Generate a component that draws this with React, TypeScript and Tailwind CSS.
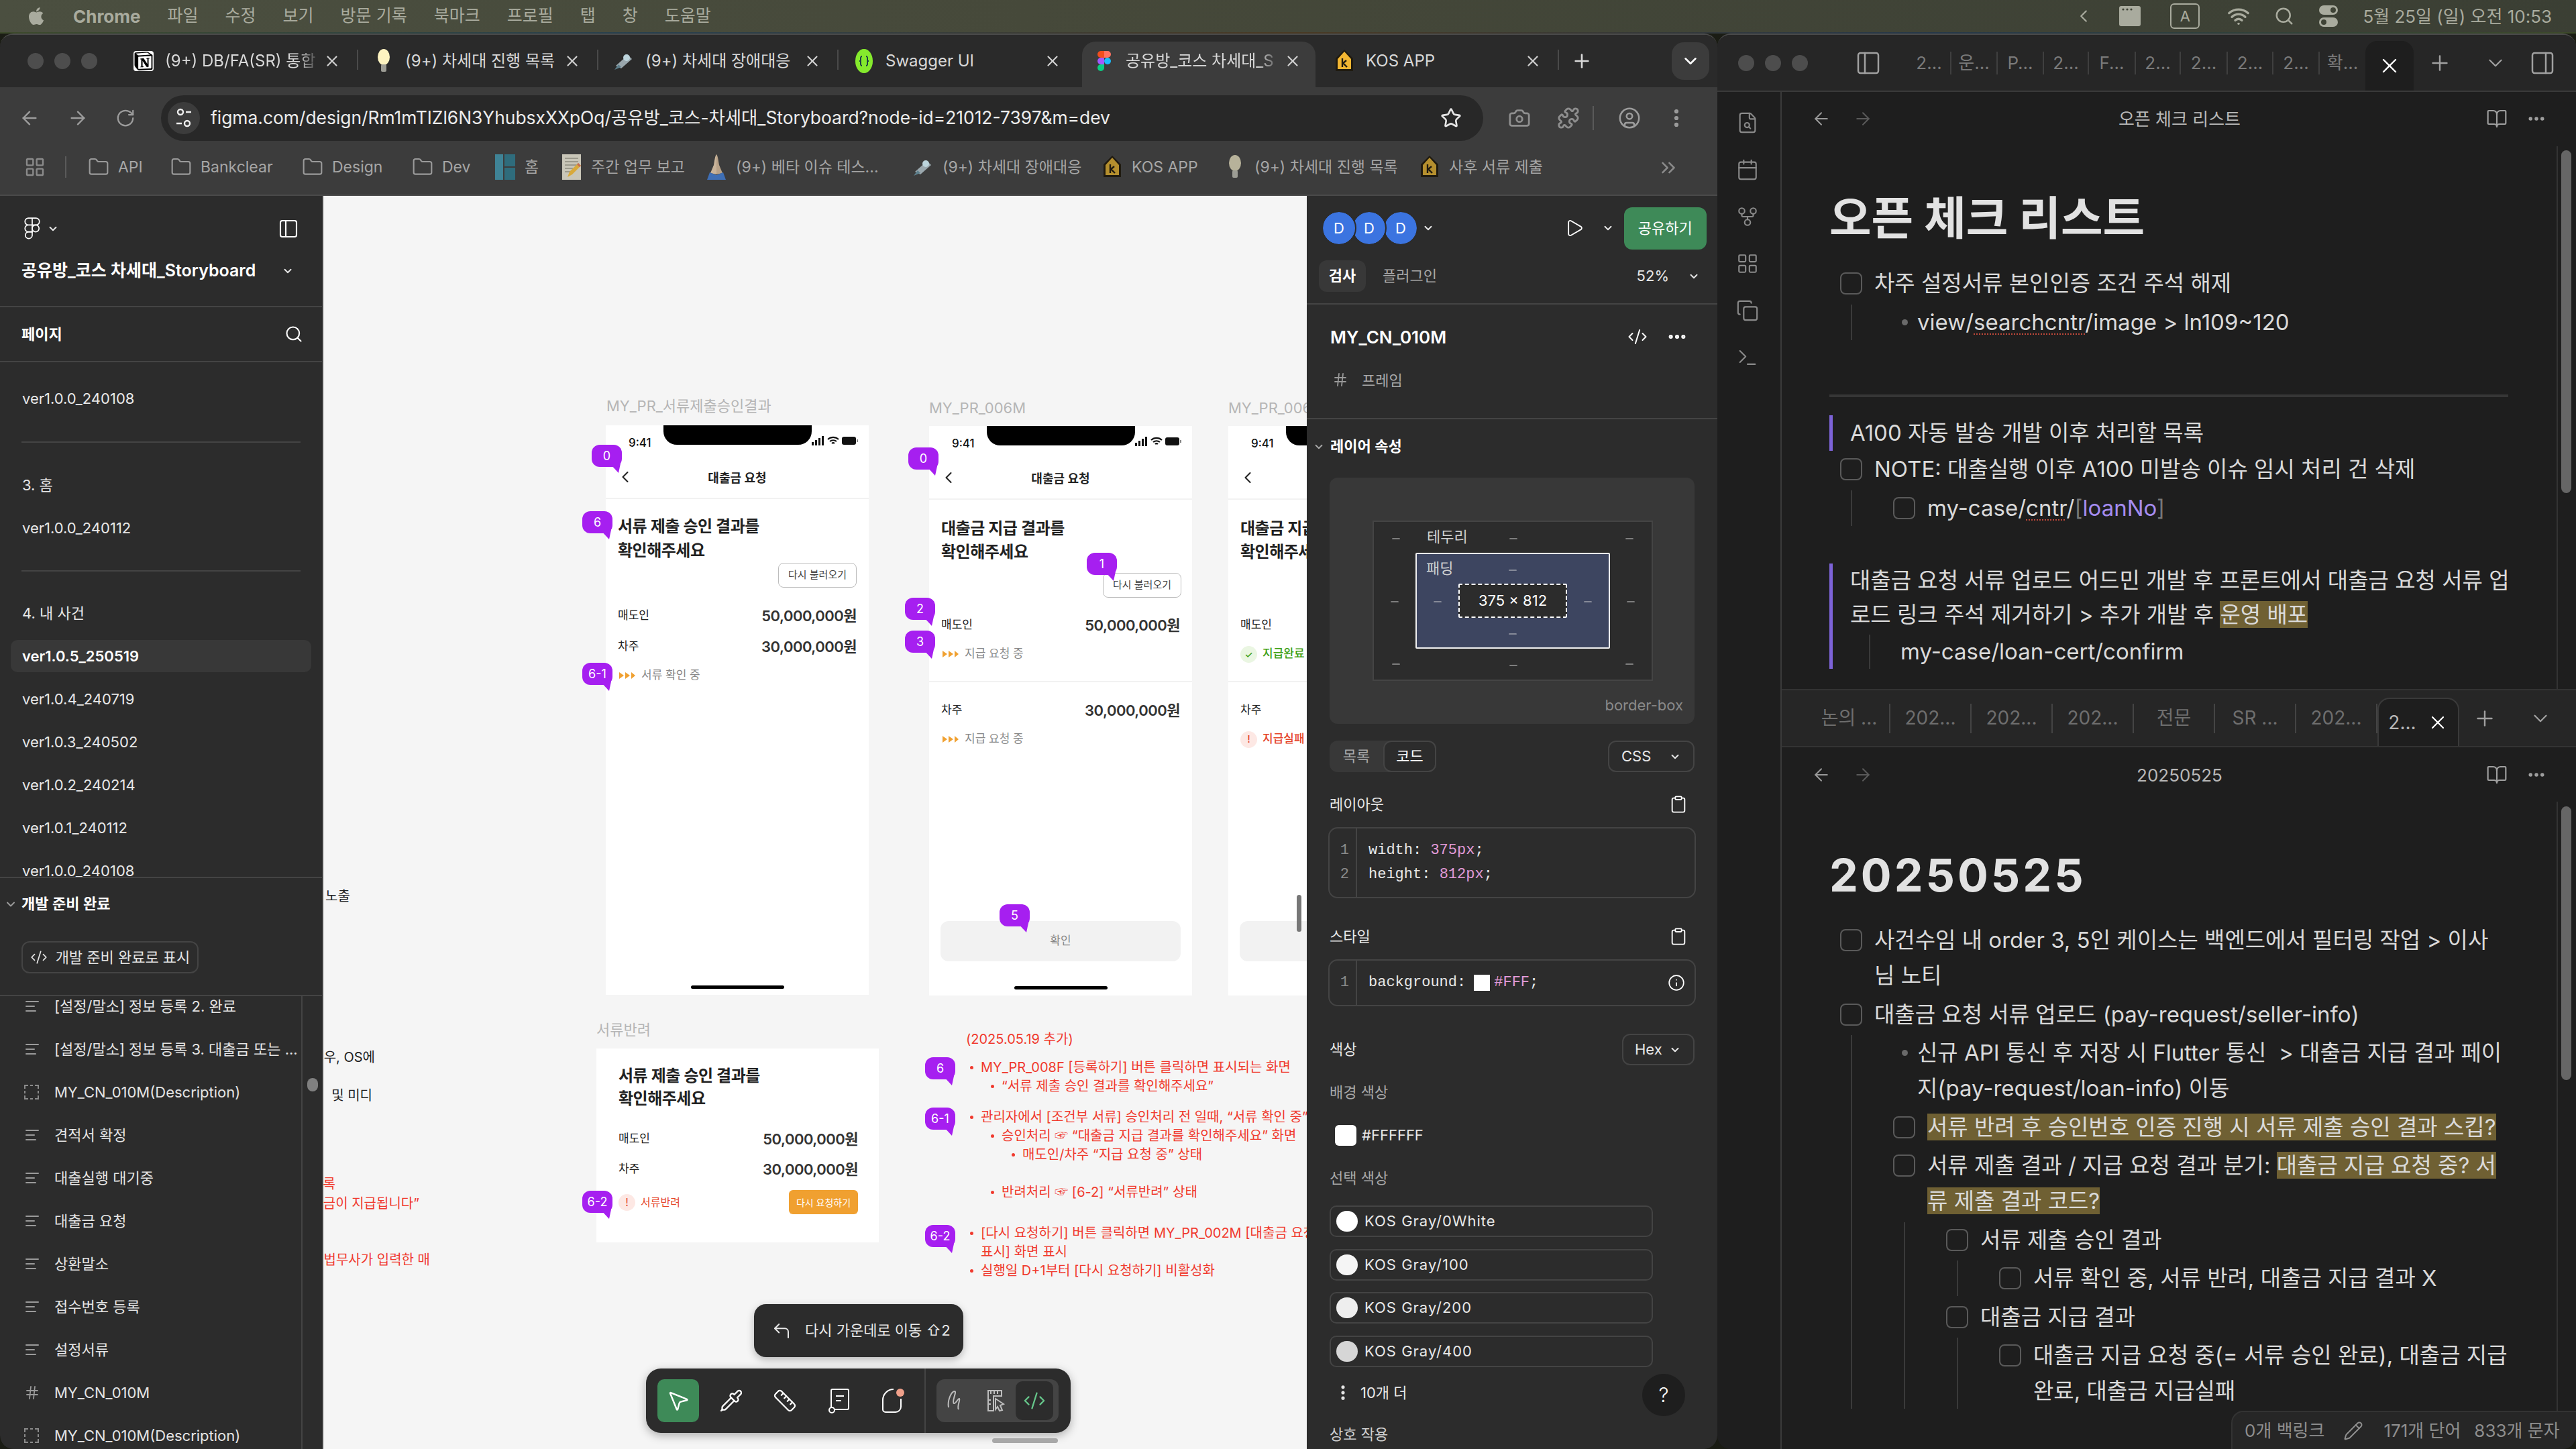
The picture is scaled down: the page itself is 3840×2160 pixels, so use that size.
import React from 'react';
import {
  AlignLeft, ArrowLeft, ArrowRight, BookOpen, Calendar, Camera, ChevronDown, ChevronLeft, ChevronsRight,
  CircleUser, Clipboard, CodeXml, Copy, CornerUpLeft, Ellipsis, EllipsisVertical, FileSearch, Folder, GitFork, Hash,
  Info, LayoutGrid, Minus, MousePointer2, PanelLeft, PanelRight, Pencil, Pipette, Play, Plus, Puzzle, RotateCw, Ruler,
  Search, Star, Terminal, Wifi, X,
} from 'lucide-react';
import { FaApple } from 'react-icons/fa';
import { SiNotion } from 'react-icons/si';

const FigmaColor = () => (
  <svg width="20" height="30" viewBox="0 0 20 30">
    <path d="M10 0H5a5 5 0 0 0 0 10h5z" fill="#f24e1e" />
    <path d="M10 0h5a5 5 0 0 1 0 10h-5z" fill="#ff7262" />
    <path d="M10 10H5a5 5 0 0 0 0 10h5z" fill="#a259ff" />
    <circle cx="15" cy="15" r="5" fill="#1abcfe" />
    <path d="M5 20h5v5a5 5 0 1 1-5-5z" fill="#0acf83" />
  </svg>
);

const FigmaOutline = () => (
  <svg width="24" height="34" viewBox="0 0 20 30" fill="none" stroke="#fff" strokeWidth="1.5">
    <path d="M10 1H5a4.5 4.5 0 0 0 0 9h5zM10 1h5a4.5 4.5 0 0 1 0 9h-5zM10 10H5a4.5 4.5 0 0 0 0 9h5z" />
    <circle cx="14.5" cy="14.5" r="4.5" />
    <path d="M5 19h5v5a4.5 4.5 0 1 1-5-5z" />
  </svg>
);

const Kos = ({ dim }: { dim?: boolean }) => (
  <svg width="30" height="36" viewBox="0 0 30 36">
    <polygon points="15,1 28,14 28,33 2,33 2,14" fill="#1f1a10" />
    <polygon points="15,4 25,15 25,30 5,30 5,15" fill={dim ? '#b58f2e' : '#f2b632'} />
    <path d="M12 14v13M12 22l6-5M13 21l6 6" fill="none" stroke="#1f1a10" strokeWidth="2.4" />
  </svg>
);

const Bulb = ({ dim }: { dim?: boolean }) => (
  <svg width="22" height="36" viewBox="0 0 22 36">
    <ellipse cx="11" cy="12" rx="9" ry="12" fill={dim ? '#b7b29a' : '#fdf3c0'} />
    <rect x="7" y="23" width="8" height="11" rx="2" fill="#9c9c94" />
  </svg>
);

const Ufo = () => (
  <svg width="32" height="30" viewBox="0 0 32 30">
    <path d="M4 22 22 6l6 6-16 14z" fill="#9aa7ad" />
    <circle cx="20" cy="10" r="5" fill="#bcd4dc" />
    <path d="M2 28l6-8 4 4z" fill="#5d7f8c" />
  </svg>
);

const Swagger = () => (
  <svg width="26" height="36" viewBox="0 0 26 36">
    <ellipse cx="13" cy="18" rx="13" ry="18" fill="#85ea2d" />
    <path d="M10 11c-3 0-2 5-2 6s-1 1-2 1c1 0 2 0 2 1s-1 6 2 6M16 11c3 0 2 5 2 6s1 1 2 1c-1 0-2 0-2 1s1 6-2 6" fill="none" stroke="#173647" strokeWidth="1.8" />
  </svg>
);

const Notion = () => (
  <div className="flex h-[30px] w-[30px] items-center justify-center rounded-[4px] bg-white">
    <SiNotion className="h-[28px] w-[28px] text-black" />
  </div>
);

const SiteInfo = () => (
  <svg width="24" height="32" viewBox="0 0 24 32" fill="none" stroke="#eee" strokeWidth="2.4">
    <circle cx="7" cy="7" r="4" />
    <path d="M15 7h8M1 24h8" />
    <circle cx="17" cy="24" r="4" />
  </svg>
);

const Memo = () => (
  <svg width="28" height="38" viewBox="0 0 28 38">
    <rect x="0" y="0" width="28" height="38" fill="#c9c6b8" />
    <path d="M4 6h20M4 11h20M4 16h20M4 21h12M4 26h8" stroke="#8c8a7e" strokeWidth="1.4" />
    <path d="M8 34l3-8 13-13 4 4-13 13z" fill="#d8a93a" />
    <path d="M22 15l4 4 2-2-4-4z" fill="#c46a55" />
  </svg>
);

const Hands = () => (
  <svg width="30" height="38" viewBox="0 0 30 38">
    <path d="M15 0c-2 2-3 10-4 16l-5 12 9 2z" fill="#c9b49a" />
    <path d="M15 0c2 2 3 10 4 16l5 12-9 2z" fill="#b8a288" />
    <path d="M5 27l10 4v7H1zM25 27l-10 4v7h14z" fill="#3f6fb5" />
  </svg>
);

const HomeGlyph = () => (
  <svg width="30" height="38" viewBox="0 0 30 38">
    <rect x="0" y="0" width="12" height="38" fill="#3f8396" />
    <rect x="14" y="0" width="16" height="18" fill="#2f6c7c" />
    <rect x="14" y="20" width="16" height="18" fill="#2f6c7c" />
  </svg>
);

interface ChromeTabProps {
  icon: React.ReactNode;
  label: string;
  active?: boolean;
  fade?: boolean;
  last?: boolean;
}

const ChromeTab = ({ icon, label, active, fade, last }: ChromeTabProps) => (
  <div className="relative flex h-[78px] w-[358px] items-center">
    {!active && !last && <div className="absolute right-0 top-[22px] h-[30px] w-[2px] bg-[#4a4a4a]" />}
    {active && <div className="absolute left-[5px] right-[5px] top-[10px] h-[68px] rounded-t-[20px] bg-[#3c3c3c]" />}
    <div className="relative flex h-[56px] w-[70px] shrink-0 items-center justify-center pl-[6px]">{icon}</div>
    <div
      className={
        fade
          ? 'relative w-[232px] overflow-hidden whitespace-nowrap text-[24px] text-[#d8d8d8] [mask-image:linear-gradient(to_right,black_85%,transparent)]'
          : 'relative w-[232px] overflow-hidden whitespace-nowrap text-[24px] text-[#d8d8d8]'
      }
    >
      {label}
    </div>
    <X className="relative ml-[4px] h-[26px] w-[26px] text-[#d0d0d0]" strokeWidth={2} />
  </div>
);

const Mark = ({ icon, label, w }: { icon: React.ReactNode; label: string; w: string }) => (
  <div className={w}>
    <div className="flex items-center gap-[13px] whitespace-nowrap text-[23px] text-[#a6a6a6]">
      <span className="flex h-[36px] w-[32px] shrink-0 items-center justify-center">{icon}</span>
      {label}
    </div>
  </div>
);

const FolderGlyph = () => <Folder className="h-[32px] w-[32px] text-[#9a9a9a]" strokeWidth={1.6} />;

const ChromeBar = () => (
  <>
    <div className="flex h-[78px] shrink-0 items-center bg-[#2a2a2a]">
      <div className="flex w-[176px] shrink-0 items-center gap-[16px] pl-[41px]">
        <span className="h-[24px] w-[24px] rounded-full bg-[#4d4d4d]" />
        <span className="h-[24px] w-[24px] rounded-full bg-[#4d4d4d]" />
        <span className="h-[24px] w-[24px] rounded-full bg-[#4d4d4d]" />
      </div>
      <ChromeTab icon={<Notion />} label="(9+) DB/FA(SR) 통합" fade />
      <ChromeTab icon={<Bulb />} label="(9+) 차세대 진행 목록" />
      <ChromeTab icon={<Ufo />} label="(9+) 차세대 장애대응" />
      <ChromeTab icon={<Swagger />} label="Swagger UI" last />
      <ChromeTab icon={<FigmaColor />} label="공유방_코스 차세대_S" active fade />
      <ChromeTab icon={<Kos />} label="KOS APP" />
      <Plus className="ml-[18px] h-[32px] w-[32px] text-[#d8d8d8]" strokeWidth={2} />
      <div className="ml-[118px] flex h-[56px] w-[56px] items-center justify-center rounded-[18px] bg-[#3c3c3c]">
        <ChevronDown className="h-[30px] w-[30px] text-white" strokeWidth={2} />
      </div>
    </div>
    <div className="flex h-[92px] shrink-0 items-center bg-[#3c3c3c]">
      <div className="flex w-[240px] shrink-0 items-center gap-[40px] pl-[28px] text-[#9c9c9c]">
        <ArrowLeft className="h-[32px] w-[32px]" strokeWidth={1.8} />
        <ArrowRight className="h-[32px] w-[32px]" strokeWidth={1.8} />
        <RotateCw className="h-[30px] w-[30px]" strokeWidth={1.8} />
      </div>
      <div className="flex h-[68px] w-[1971px] shrink-0 items-center rounded-full bg-[#282828] pl-[10px] pr-[32px]">
        <div className="flex h-[48px] w-[48px] items-center justify-center rounded-full bg-[#3c3c3c]">
          <SiteInfo />
        </div>
        <div className="ml-[16px] flex-1 whitespace-nowrap text-[26.4px] text-[#ececec]">
          figma.com/design/Rm1mTIZl6N3YhubsxXXpOq/공유방_코스-차세대_Storyboard?node-id=21012-7397&m=dev
        </div>
        <Star className="h-[32px] w-[32px] text-[#e6e6e6]" strokeWidth={2} />
      </div>
      <Camera className="ml-[37px] h-[34px] w-[34px] text-[#8e8e8e]" strokeWidth={2} />
      <Puzzle className="ml-[39px] h-[34px] w-[34px] text-[#8e8e8e]" strokeWidth={2} />
      <div className="ml-[19px] h-[36px] w-[2px] bg-[#5a5a5a]" />
      <CircleUser className="ml-[36px] h-[34px] w-[34px] text-[#9c9c9c]" strokeWidth={1.8} />
      <EllipsisVertical className="ml-[36px] h-[34px] w-[34px] text-[#9c9c9c]" strokeWidth={2.4} />
    </div>
    <div className="relative flex h-[70px] shrink-0 items-center border-b-[2px] border-[#4a4a4a] bg-[#3c3c3c] pb-[14px]">
      <LayoutGrid className="ml-[36px] h-[32px] w-[32px] text-[#8a8a8a]" strokeWidth={1.8} />
      <div className="ml-[29px] h-[32px] w-[2px] bg-[#5a5a5a]" />
      <div className="ml-[32px] flex items-center">
        <Mark w="w-[123px]" icon={<FolderGlyph />} label="API" />
        <Mark w="w-[196px]" icon={<FolderGlyph />} label="Bankclear" />
        <Mark w="w-[164px]" icon={<FolderGlyph />} label="Design" />
        <Mark w="w-[123px]" icon={<FolderGlyph />} label="Dev" />
        <Mark w="w-[99px]" icon={<HomeGlyph />} label="홈" />
        <Mark w="w-[216px]" icon={<Memo />} label="주간 업무 보고" />
        <Mark w="w-[308px]" icon={<Hands />} label="(9+) 베타 이슈 테스..." />
        <Mark w="w-[282px]" icon={<Ufo />} label="(9+) 차세대 장애대응" />
        <Mark w="w-[183px]" icon={<Kos dim />} label="KOS APP" />
        <Mark w="w-[290px]" icon={<Bulb dim />} label="(9+) 차세대 진행 목록" />
        <Mark w="w-[200px]" icon={<Kos dim />} label="사후 서류 제출" />
      </div>
      <ChevronsRight className="absolute right-[56px] top-[11px] h-[34px] w-[34px] text-[#8a8a8a]" strokeWidth={1.8} />
    </div>
  </>
);

const Rule = () => <div className="h-[2px] shrink-0 bg-[#444444]" />;
const Chev = () => <ChevronDown className="h-[18px] w-[18px] text-[#e6e6e6]" strokeWidth={2.6} />;

const PageRow = ({ label, active }: { label: string; active?: boolean }) =>
  active ? (
    <div className="flex h-[64px] items-center">
      <div className="mx-[16px] flex h-[48px] flex-1 items-center rounded-[10px] bg-[#383838] pl-[17px] text-[22px] font-semibold leading-none text-white">{label}</div>
    </div>
  ) : (
    <div className="mx-[16px] flex h-[64px] items-center pl-[17px] text-[22px] leading-none text-[#e8e8e8]">{label}</div>
  );

const TextGlyph = () => <AlignLeft className="h-[24px] w-[24px] text-[#9a9a9a]" strokeWidth={2} />;
const FrameGlyph = () => <Hash className="h-[24px] w-[24px] text-[#9a9a9a]" strokeWidth={1.8} />;
const DashGlyph = () => (
  <svg width="22" height="22" viewBox="0 0 22 22" fill="none" stroke="#8a8a8a" strokeWidth="2">
    <path d="M1 6V1h5M9 1h4M16 1h5v5M21 9v4M21 16v5h-5M13 21H9M6 21H1v-5M1 13V9" />
  </svg>
);

const LayerRow = ({ icon, label }: { icon: React.ReactNode; label: string }) => (
  <div className="flex h-[64px] shrink-0 items-center pl-[36px] text-[22px] text-[#e4e4e4]">
    <span className="flex w-[45px] shrink-0 items-center">{icon}</span>
    <span className="whitespace-nowrap">{label}</span>
  </div>
);

const LeftSidebar = () => (
  <div className="relative flex w-[482px] shrink-0 flex-col overflow-hidden rounded-bl-[20px] border-r-[2px] border-[#444444] bg-[#2c2c2c]">
    <div className="flex h-[164px] shrink-0 flex-col px-[32px] pt-[32px]">
      <div className="flex h-[34px] items-center justify-between">
        <div className="flex items-center gap-[10px] pl-[4px]">
          <FigmaOutline />
          <Chev />
        </div>
        <PanelLeft className="h-[32px] w-[36px] text-white" strokeWidth={1.6} />
      </div>
      <div className="mt-[27px] flex items-center text-[25px] font-semibold text-white">
        <span className="w-[388px] whitespace-nowrap">공유방_코스 차세대_Storyboard</span>
        <Chev />
      </div>
    </div>
    <Rule />
    <div className="flex h-[80px] shrink-0 items-center justify-between pl-[32px] pr-[28px] text-[22px] font-semibold text-white">
      페이지
      <Search className="h-[28px] w-[28px]" strokeWidth={1.8} />
    </div>
    <Rule />
    <div className="h-[767px] shrink-0 overflow-hidden pt-[22px]">
      <PageRow label="ver1.0.0_240108" />
      <div className="mx-[32px] mt-[32px] h-[2px] bg-[#444444]" />
      <div className="h-[31px]" />
      <PageRow label="3. 홈" />
      <PageRow label="ver1.0.0_240112" />
      <div className="mx-[32px] mt-[31px] h-[2px] bg-[#444444]" />
      <div className="h-[30px]" />
      <PageRow label="4. 내 사건" />
      <PageRow label="ver1.0.5_250519" active />
      <PageRow label="ver1.0.4_240719" />
      <PageRow label="ver1.0.3_240502" />
      <PageRow label="ver1.0.2_240214" />
      <PageRow label="ver1.0.1_240112" />
      <PageRow label="ver1.0.0_240108" />
    </div>
    <Rule />
    <div className="flex h-[174px] shrink-0 flex-col">
      <div className="mt-[22px] flex items-center text-[22px] font-semibold text-white">
        <ChevronDown className="ml-[6px] mr-[6px] h-[20px] w-[20px] text-[#9a9a9a]" strokeWidth={2.4} />
        개발 준비 완료
      </div>
      <div className="ml-[32px] mt-[39px] flex h-[48px] w-[264px] items-center justify-center gap-[12px] rounded-[12px] border-[2px] border-[#444444] text-[22px] text-[#e4e4e4]">
        <CodeXml className="h-[26px] w-[26px]" strokeWidth={1.6} />
        개발 준비 완료로 표시
      </div>
    </div>
    <Rule />
    <div className="relative flex-1 overflow-hidden">
      <div className="-mt-[17px] flex flex-col">
        <LayerRow icon={<TextGlyph />} label="[설정/말소] 정보 등록 2. 완료" />
        <LayerRow icon={<TextGlyph />} label="[설정/말소] 정보 등록 3. 대출금 또는 ..." />
        <LayerRow icon={<DashGlyph />} label="MY_CN_010M(Description)" />
        <LayerRow icon={<TextGlyph />} label="견적서 확정" />
        <LayerRow icon={<TextGlyph />} label="대출실행 대기중" />
        <LayerRow icon={<TextGlyph />} label="대출금 요청" />
        <LayerRow icon={<TextGlyph />} label="상환말소" />
        <LayerRow icon={<TextGlyph />} label="접수번호 등록" />
        <LayerRow icon={<TextGlyph />} label="설정서류" />
        <LayerRow icon={<FrameGlyph />} label="MY_CN_010M" />
        <LayerRow icon={<DashGlyph />} label="MY_CN_010M(Description)" />
      </div>
      <div className="absolute bottom-0 left-[449px] top-0 w-[2px] bg-[#444444]" />
      <div className="absolute left-[458px] top-[122px] h-[20px] w-[16px] rounded-full bg-[#808080]" />
    </div>
  </div>
);

const Bubble = ({ pos, label }: { pos: string; label: string }) => (
  <div className={pos}>
    <div className="flex h-[33px] w-[45px] items-center justify-center rounded-[12px] bg-[#a61ff0] text-[18px] text-white">{label}</div>
    <svg className="absolute bottom-[-9px] right-[2px]" width="16" height="14" viewBox="0 0 16 14">
      <polygon points="0,0 16,0 13,14" fill="#a61ff0" />
    </svg>
  </div>
);

const SignalIcons = () => (
  <svg width="69" height="16" viewBox="0 0 69 16">
    <rect x="0" y="10" width="3" height="5" fill="#111" />
    <rect x="5" y="7" width="3" height="8" fill="#111" />
    <rect x="10" y="4" width="3" height="11" fill="#111" />
    <rect x="15" y="1" width="3" height="14" fill="#111" />
    <path d="M24 6a12 12 0 0 1 16 0M27 9a8 8 0 0 1 10 0M30 12a3 3 0 0 1 4 0" fill="none" stroke="#111" strokeWidth="2.2" />
    <rect x="45" y="2" width="21" height="12" rx="3" fill="#111" />
    <rect x="67" y="6" width="2" height="4" fill="#888" />
  </svg>
);

const PhoneHeader = () => (
  <>
    <div className="relative flex h-[48px] shrink-0 items-end pb-[13px]">
      <span className="ml-[34px] text-[17px] font-medium leading-none text-[#111]">9:41</span>
      <div className="absolute left-[86px] top-0 h-[29px] w-[221px] rounded-b-[20px] bg-black" />
      <div className="absolute left-[307px] top-[15px]"><SignalIcons /></div>
    </div>
    <div className="relative flex h-[62px] shrink-0 items-center justify-center border-b-[2px] border-[#f2f2f2] text-[18px] font-semibold text-[#222]">
      <ChevronLeft className="absolute left-[15px] top-[15px] h-[28px] w-[28px] text-[#222]" strokeWidth={1.8} />
      대출금 요청
    </div>
  </>
);

const AmountRow = ({ label, value, mt }: { label: string; value: string; mt: string }) => (
  <div className={mt}>
    <div className="flex h-[34px] items-center justify-between text-[#222]">
      <span className="text-[17px]">{label}</span>
      <span className="text-[22px] font-semibold tracking-[-0.5px] text-[#333]">{value}</span>
    </div>
  </div>
);

const Arrows = () => (
  <svg width="24" height="12" viewBox="0 0 24 12" fill="#f0a030">
    <polygon points="0,1 7,6 0,11" />
    <polygon points="9,1 16,6 9,11" />
    <polygon points="18,1 24,6 18,11" />
  </svg>
);

const StatusPending = ({ label, mt }: { label: string; mt: string }) => (
  <div className={mt}>
    <div className="flex h-[24px] items-center gap-[9px] pl-[2px] text-[17px] text-[#888]">
      <Arrows />
      {label}
    </div>
  </div>
);

const ReloadBtn = ({ wrap }: { wrap: string }) => (
  <div className={wrap}>
    <div className="flex h-[37px] w-[117px] items-center justify-center rounded-[8px] border-[1.5px] border-[#bdbdbd] text-[15px] text-[#444]">다시 불러오기</div>
  </div>
);

const FirstPhone = () => (
  <div className="absolute left-[421px] top-[342px] flex h-[849px] w-[392px] flex-col bg-white">
    <PhoneHeader />
    <div className="flex flex-1 flex-col px-[18px]">
      <div className="pt-[23px] text-[24px] font-semibold leading-[36px] tracking-[-0.5px] text-[#222]">서류 제출 승인 결과를<br />확인해주세요</div>
      <ReloadBtn wrap="flex justify-end" />
      <AmountRow label="매도인" value="50,000,000원" mt="mt-[25px]" />
      <AmountRow label="차주" value="30,000,000원" mt="mt-[12px]" />
      <StatusPending label="서류 확인 중" mt="mt-[14px]" />
    </div>
    <div className="mx-auto mb-[9px] h-[5px] w-[139px] rounded-full bg-black" />
  </div>
);

const ResultPhone = ({ pos, seller, buyer, showBtn }: { pos: string; seller: React.ReactNode; buyer: React.ReactNode; showBtn?: boolean }) => (
  <div className={pos}>
    <PhoneHeader />
    <div className="px-[18px] pt-[25px] text-[24px] font-semibold leading-[35px] tracking-[-0.5px] text-[#222]">대출금 지급 결과를<br />확인해주세요</div>
    <div className="h-[14px]" />
    {showBtn ? <ReloadBtn wrap="flex justify-end px-[16px]" /> : <div className="h-[37px]" />}
    <div className="px-[18px]">
      <AmountRow label="매도인" value="50,000,000원" mt="mt-[24px]" />
      {seller}
    </div>
    <div className="mt-[28px] h-[2px] bg-[#f2f2f2]" />
    <div className="px-[18px]">
      <AmountRow label="차주" value="30,000,000원" mt="mt-[25px]" />
      {buyer}
    </div>
    <div className="mx-[17px] mt-auto flex h-[60px] items-center justify-center rounded-[12px] bg-[#f2f2f2] text-[17px] text-[#888]">{showBtn ? '확인' : ''}</div>
    <div className="mx-auto mb-[9px] mt-[37px] h-[5px] w-[139px] rounded-full bg-black" />
  </div>
);

const NoteLine = ({ level, mt, children }: { level: 0 | 1 | 2 | 3; mt?: string; children: React.ReactNode }) => {
  const indent = ['pl-0', 'pl-[6px]', 'pl-[37px]', 'pl-[68px]'][level];
  return (
    <div className={`${indent} ${mt ?? ''} flex h-[28px] items-center whitespace-nowrap`}>
      {level > 0 && <span className="mr-[11px] h-[5px] w-[5px] shrink-0 rounded-full bg-[#f03a2e]" />}
      {children}
    </div>
  );
};

const Canvas = () => (
  <div className="relative flex-1 overflow-hidden bg-[#f5f5f5] text-[20px]">
    <div className="absolute left-[3px] top-[1029px] text-[20px] text-[#222]">노출</div>
    <div className="absolute right-[1389px] top-[1269px] whitespace-nowrap text-[20px] text-[#222]">우, OS에</div>
    <div className="absolute right-[1393px] top-[1326px] whitespace-nowrap text-[20px] text-[#222]">및 미디</div>
    <div className="absolute right-[1448px] top-[1458px] whitespace-nowrap text-[20px] text-[#f03a2e]">록</div>
    <div className="absolute right-[1323px] top-[1487px] whitespace-nowrap text-[20px] text-[#f03a2e]">금이 지급됩니다”</div>
    <div className="absolute right-[1307px] top-[1571px] whitespace-nowrap text-[20px] text-[#f03a2e]">법무사가 입력한 매</div>

    <div className="absolute left-[422px] top-[300px] whitespace-nowrap text-[22px] leading-[26px] text-[#b5b5b5]">MY_PR_서류제출승인결과</div>
    <div className="absolute left-[903px] top-[303px] whitespace-nowrap text-[22px] leading-[26px] text-[#b5b5b5]">MY_PR_006M</div>
    <div className="absolute left-[1349px] top-[303px] whitespace-nowrap text-[22px] leading-[26px] text-[#b5b5b5]">MY_PR_006M</div>

    <FirstPhone />
    <ResultPhone
      pos="absolute left-[903px] top-[343px] flex h-[849px] w-[392px] flex-col bg-white"
      showBtn
      seller={<StatusPending label="지급 요청 중" mt="mt-[14px]" />}
      buyer={<StatusPending label="지급 요청 중" mt="mt-[14px]" />}
    />
    <ResultPhone
      pos="absolute left-[1349px] top-[343px] flex h-[849px] w-[392px] flex-col bg-white"
      seller={
        <div className="mt-[14px] flex h-[24px] items-center gap-[8px] text-[17px] font-medium text-[#3fa012]">
          <span className="flex h-[25px] w-[25px] items-center justify-center rounded-full bg-[#eaf6e2] text-[14px]">✓</span>
          지급완료
        </div>
      }
      buyer={
        <div className="mt-[14px] flex h-[24px] items-center gap-[8px] text-[17px] font-medium text-[#e5452a]">
          <span className="flex h-[25px] w-[25px] items-center justify-center rounded-full bg-[#fde8e4] text-[15px]">!</span>
          지급실패 [사유]
        </div>
      }
    />

    <div className="absolute left-[407px] top-[1230px] text-[22px] leading-[26px] text-[#b5b5b5]">서류반려</div>
    <div className="absolute left-[407px] top-[1271px] flex h-[289px] w-[421px] flex-col bg-white pl-[33px] pr-[31px] pt-[24px]">
      <div className="text-[24px] font-semibold leading-[34px] tracking-[-0.5px] text-[#222]">서류 제출 승인 결과를<br />확인해주세요</div>
      <AmountRow label="매도인" value="50,000,000원" mt="mt-[26px]" />
      <AmountRow label="차주" value="30,000,000원" mt="mt-[11px]" />
      <div className="mt-[14px] flex h-[36px] items-center justify-between">
        <div className="flex items-center gap-[8px] text-[16px] text-[#e5452a]">
          <span className="flex h-[25px] w-[25px] items-center justify-center rounded-full bg-[#fde8e4]">!</span>
          서류반려
        </div>
        <div className="flex h-[36px] w-[103px] items-center justify-center rounded-[6px] bg-[#f0a030] text-[14px] text-white">다시 요청하기</div>
      </div>
    </div>

    <div className="absolute left-[958px] top-[1243px] text-[20px] text-[#f03a2e]">
      <NoteLine level={0}>(2025.05.19 추가)</NoteLine>
      <NoteLine level={1} mt="mt-[14px]">MY_PR_008F [등록하기] 버튼 클릭하면 표시되는 화면</NoteLine>
      <NoteLine level={2}>“서류 제출 승인 결과를 확인해주세요”</NoteLine>
      <NoteLine level={1} mt="mt-[18px]">관리자에서 [조건부 서류] 승인처리 전 일때, “서류 확인 중” 상태</NoteLine>
      <NoteLine level={2}>승인처리 ☞ “대출금 지급 결과를 확인해주세요” 화면</NoteLine>
      <NoteLine level={3}>매도인/차주 “지급 요청 중” 상태</NoteLine>
      <div className="h-[28px]" />
      <NoteLine level={2}>반려처리 ☞ [6-2] “서류반려” 상태</NoteLine>
      <NoteLine level={1} mt="mt-[33px]">[다시 요청하기] 버튼 클릭하면 MY_PR_002M [대출금 요청</NoteLine>
      <div className="flex h-[28px] items-center pl-[22px]">표시] 화면 표시</div>
      <NoteLine level={1}>실행일 D+1부터 [다시 요청하기] 비활성화</NoteLine>
    </div>

    <Bubble pos="absolute left-[400px] top-[371px]" label="0" />
    <Bubble pos="absolute left-[386px] top-[470px]" label="6" />
    <Bubble pos="absolute left-[386px] top-[696px]" label="6-1" />
    <Bubble pos="absolute left-[872px] top-[375px]" label="0" />
    <Bubble pos="absolute left-[1138px] top-[532px]" label="1" />
    <Bubble pos="absolute left-[867px] top-[599px]" label="2" />
    <Bubble pos="absolute left-[867px] top-[648px]" label="3" />
    <Bubble pos="absolute left-[1008px] top-[1056px]" label="5" />
    <Bubble pos="absolute left-[386px] top-[1483px]" label="6-2" />
    <Bubble pos="absolute left-[897px] top-[1284px]" label="6" />
    <Bubble pos="absolute left-[897px] top-[1359px]" label="6-1" />
    <Bubble pos="absolute left-[897px] top-[1534px]" label="6-2" />

    <div className="absolute left-[642px] top-[1652px] flex h-[79px] w-[312px] items-center gap-[20px] rounded-[18px] bg-[#2c2c2c] pl-[26px] text-[22px] text-[#e8e8e8] shadow-[0_4px_12px_rgba(0,0,0,0.25)]">
      <CornerUpLeft className="h-[30px] w-[30px]" strokeWidth={1.6} />
      <span className="whitespace-nowrap">다시 가운데로 이동 ⇧2</span>
    </div>
    <div className="absolute left-[481px] top-[1748px] flex h-[96px] w-[633px] items-center rounded-[22px] bg-[#2c2c2c] pl-[17px] shadow-[0_4px_14px_rgba(0,0,0,0.3)]">
      <div className="flex h-[64px] w-[62px] items-center justify-center rounded-[10px] bg-[#3e8a58]">
        <MousePointer2 className="h-[36px] w-[36px] text-white" strokeWidth={1.6} />
      </div>
      <div className="ml-[30px] flex items-center gap-[44px] text-white">
        <Pipette className="h-[36px] w-[36px]" strokeWidth={1.5} />
        <Ruler className="h-[36px] w-[36px]" strokeWidth={1.5} />
        <svg width="36" height="38" viewBox="0 0 36 38" fill="none" stroke="#fff" strokeWidth="2">
          <path d="M7 30V4a2 2 0 0 1 2-2h22a2 2 0 0 1 2 2v26a2 2 0 0 1-2 2H12" />
          <circle cx="8" cy="33" r="4" />
          <path d="M14 12h12M14 19h8" />
        </svg>
        <svg width="36" height="38" viewBox="0 0 36 38" fill="none" stroke="#fff" strokeWidth="2">
          <path d="M31 16v12a8 8 0 0 1-8 8H8a4 4 0 0 1-4-4V18A16 16 0 0 1 20 2" />
          <circle cx="30" cy="7" r="6" fill="#f0a08a" stroke="none" />
        </svg>
      </div>
      <div className="ml-[30px] h-[96px] w-[2px] bg-[#444444]" />
      <div className="ml-[16px] flex h-[64px] w-[182px] items-center rounded-[12px] bg-[#444444] pl-[14px]">
        <svg width="30" height="36" viewBox="0 0 30 36" fill="none" stroke="#bdbdbd" strokeWidth="2">
          <path d="M4 28C2 18 8 4 13 4c4 0-5 16-1 18 3 1 6-8 8-7 2 1-4 12-1 16" />
        </svg>
        <svg className="ml-[30px]" width="30" height="36" viewBox="0 0 30 36" fill="none" stroke="#bdbdbd" strokeWidth="2">
          <path d="M3 3h20v8H11v22H3zM7 3v5M12 3v5M17 3v5M3 17h4M3 23h4" />
          <path d="M14 15l12 8-5 2 3 7-4 1-3-6-3 4z" />
        </svg>
        <div className="ml-[14px] flex h-[58px] w-[56px] items-center justify-center rounded-[10px] bg-[#2c2c2c]">
          <CodeXml className="h-[34px] w-[34px] text-[#66c58a]" strokeWidth={1.6} />
        </div>
      </div>
    </div>
    <div className="absolute left-[997px] top-[1852px] h-[7px] w-[98px] rounded-full bg-[#a8a8a8]" />
    <div className="absolute left-[1451px] top-[1042px] h-[55px] w-[7px] rounded-full bg-[#777777]" />
  </div>
);

const CopyIcon = () => <Clipboard className="h-[28px] w-[28px] text-white" strokeWidth={1.6} />;

const CodeBox = ({ nums, children }: { nums: string[]; children: React.ReactNode }) => (
  <div className="mx-[32px] flex items-stretch rounded-[14px] border-[2px] border-[#444444] [font-family:'Liberation_Mono',monospace] text-[22px] leading-[36px]">
    <div className="w-[41px] shrink-0 border-r-[2px] border-[#444444] py-[15px] pr-[10px] text-right text-[#8a8a8a]">
      {nums.map((n) => (
        <div key={n}>{n}</div>
      ))}
    </div>
    <div className="flex-1 py-[15px] pl-[17px] pr-[14px] text-[#e8e8e8]">{children}</div>
  </div>
);

const KosRow = ({ swatch, label, mt }: { swatch: string; label: string; mt: string }) => (
  <div className={mt}>
    <div className="flex h-[47px] w-[482px] items-center rounded-[10px] border-[2px] border-[#444444] pl-[8px] text-[22px] tracking-[1px] text-[#e8e8e8]">
      <span className={swatch} />
      <span className="ml-[10px]">{label}</span>
    </div>
  </div>
);

const Dash = ({ pos }: { pos: string }) => <Minus className={pos} strokeWidth={1.5} />;

const RightPanel = () => (
  <div className="relative flex w-[612px] shrink-0 flex-col overflow-hidden rounded-br-[20px] bg-[#2c2c2c] text-[22px] text-[#e8e8e8]">
    <div className="flex h-[96px] shrink-0 items-center pl-[24px] pr-[16px]">
      <div className="flex items-center">
        <span className="z-10 flex h-[48px] w-[48px] items-center justify-center rounded-full bg-[#3b74e0] text-white outline outline-[2px] outline-[#2c2c2c]">D</span>
        <span className="z-[9] -ml-[3px] flex h-[48px] w-[48px] items-center justify-center rounded-full bg-[#3b74e0] text-white outline outline-[2px] outline-[#2c2c2c]">D</span>
        <span className="-ml-[1px] flex h-[48px] w-[48px] items-center justify-center rounded-full bg-[#3b74e0] text-white outline outline-[2px] outline-[#2c2c2c]">D</span>
      </div>
      <span className="ml-[8px]"><Chev /></span>
      <Play className="ml-[194px] h-[30px] w-[30px] text-white" strokeWidth={1.5} />
      <span className="ml-[26px]"><Chev /></span>
      <div className="ml-[15px] flex h-[63px] w-[125px] items-center justify-center rounded-[12px] bg-[#3e8a58] text-white">공유하기</div>
    </div>
    <div className="flex h-[64px] shrink-0 items-start pl-[18px] pr-[26px]">
      <div className="flex h-[47px] w-[70px] items-center justify-center rounded-[12px] bg-[#383838] font-semibold text-white">검사</div>
      <div className="ml-[25px] flex h-[47px] items-center text-[#a8a8a8]">플러그인</div>
      <div className="ml-auto flex h-[47px] items-center gap-[28px] text-[#e8e8e8]">52%<Chev /></div>
    </div>
    <Rule />
    <div className="flex h-[80px] shrink-0 items-center justify-between pl-[35px] pr-[44px] pt-[16px] text-[26px] font-semibold text-white">
      MY_CN_010M
      <div className="flex items-center gap-[28px] text-white">
        <CodeXml className="h-[30px] w-[30px]" strokeWidth={1.6} />
        <Ellipsis className="h-[32px] w-[32px]" strokeWidth={2.6} />
      </div>
    </div>
    <div className="flex h-[89px] shrink-0 items-start pl-[38px] pt-[17px] text-[#a8a8a8]">
      <Hash className="mt-[3px] h-[24px] w-[24px] text-[#9a9a9a]" strokeWidth={1.8} />
      <span className="ml-[20px]">프레임</span>
    </div>
    <Rule />
    <div className="flex h-[87px] shrink-0 items-center pl-[9px] pb-[6px] font-semibold text-white">
      <ChevronDown className="mr-[8px] h-[18px] w-[18px] text-[#a8a8a8]" strokeWidth={2.4} />
      레이어 속성
    </div>
    {/* box model */}
    <div className="mx-[34px] flex h-[367px] shrink-0 flex-col rounded-[12px] bg-[#383838] pl-[64px] pr-[64px] pt-[64px] text-[#d0d0d0]">
      <div className="relative flex h-[239px] w-[418px] shrink-0 items-center justify-center border-[2px] border-[#444444] bg-[#2c2c2c]">
        <span className="absolute left-[79px] top-[8px] leading-[28px]">테두리</span>
        <Dash pos="absolute left-[24px] top-[16px] h-[18px] w-[18px]" />
        <Dash pos="absolute left-[199px] top-[16px] h-[18px] w-[18px]" />
        <Dash pos="absolute right-[24px] top-[16px] h-[18px] w-[18px]" />
        <Dash pos="absolute left-[22px] top-[110px] h-[18px] w-[18px]" />
        <Dash pos="absolute right-[22px] top-[110px] h-[18px] w-[18px]" />
        <Dash pos="absolute left-[24px] top-[203px] h-[18px] w-[18px]" />
        <Dash pos="absolute left-[199px] top-[205px] h-[18px] w-[18px]" />
        <Dash pos="absolute right-[24px] top-[203px] h-[18px] w-[18px]" />
        <div className="relative flex h-[143px] w-[290px] items-center justify-center rounded-[2px] border-[2px] border-[#f0f0f0] bg-[#3d4560]">
          <span className="absolute left-[14px] top-[7px] leading-[28px]">패딩</span>
          <Dash pos="absolute left-[134px] top-[15px] h-[18px] w-[18px]" />
          <Dash pos="absolute left-[22px] top-[62px] h-[18px] w-[18px]" />
          <Dash pos="absolute right-[22px] top-[62px] h-[18px] w-[18px]" />
          <Dash pos="absolute left-[134px] top-[110px] h-[18px] w-[18px]" />
          <div className="flex h-[51px] w-[162px] items-center justify-center rounded-[2px] border-[2px] border-dashed border-white bg-[#2c2c2c] text-white">375 × 812</div>
        </div>
      </div>
      <div className="mt-[22px] -mr-[47px] text-right leading-[28px] text-[#8a8a8a]">border-box</div>
    </div>
    <div className="mx-[34px] mt-[25px] flex h-[47px] shrink-0 items-center justify-between">
      <div className="flex h-[47px] w-[159px] items-stretch rounded-[12px] bg-[#383838]">
        <span className="flex w-[80px] items-center justify-center text-[#a8a8a8]">목록</span>
        <span className="flex w-[79px] items-center justify-center rounded-[12px] border-[2px] border-[#444444] bg-[#2c2c2c] text-white">코드</span>
      </div>
      <div className="flex h-[47px] w-[129px] items-center justify-between rounded-[12px] border-[2px] border-[#444444] pl-[18px] pr-[18px]">CSS<Chev /></div>
    </div>
    <div className="mx-[34px] mt-[25px] flex h-[46px] shrink-0 items-center justify-between pr-[10px]">레이아웃<CopyIcon /></div>
    <div className="mt-[11px] shrink-0">
      <CodeBox nums={['1', '2']}>
        <div>width: <span className="text-[#e29bd9]">375px</span>;</div>
        <div>height: <span className="text-[#e29bd9]">812px</span>;</div>
      </CodeBox>
    </div>
    <div className="mx-[34px] mt-[34px] flex h-[46px] shrink-0 items-center justify-between pr-[10px]">스타일<CopyIcon /></div>
    <div className="mt-[11px] shrink-0">
      <CodeBox nums={['1']}>
        <div className="relative flex items-center">
          background:
          <span className="ml-[12px] mr-[6px] h-[24px] w-[24px] bg-white" />
          <span className="text-[#e29bd9]">#FFF</span>;
          <Info className="absolute right-[0px] top-[5px] h-[26px] w-[26px] text-white" strokeWidth={1.6} />
        </div>
      </CodeBox>
    </div>
    <div className="mx-[34px] mt-[41px] flex h-[47px] shrink-0 items-center justify-between">
      색상
      <div className="flex h-[47px] w-[108px] items-center justify-between rounded-[12px] border-[2px] border-[#444444] pl-[17px] pr-[18px]">Hex<Chev /></div>
    </div>
    <div className="ml-[34px] mt-[24px] h-[32px] shrink-0 leading-[32px] text-[#a8a8a8]">배경 색상</div>
    <div className="ml-[42px] mt-[32px] flex h-[32px] shrink-0 items-center">
      <span className="h-[31px] w-[32px] rounded-[6px] bg-white" />
      <span className="ml-[8px]">#FFFFFF</span>
    </div>
    <div className="ml-[34px] mt-[32px] h-[32px] shrink-0 leading-[32px] text-[#a8a8a8]">선택 색상</div>
    <div className="ml-[34px] shrink-0">
      <KosRow swatch="h-[31px] w-[32px] rounded-full bg-white" label="KOS Gray/0White" mt="mt-[25px]" />
      <KosRow swatch="h-[31px] w-[32px] rounded-full bg-[#f5f5f5]" label="KOS Gray/100" mt="mt-[18px]" />
      <KosRow swatch="h-[31px] w-[32px] rounded-full bg-[#eeeeee]" label="KOS Gray/200" mt="mt-[17px]" />
      <KosRow swatch="h-[31px] w-[32px] rounded-full bg-[#d6d6d6]" label="KOS Gray/400" mt="mt-[18px]" />
    </div>
    <div className="ml-[42px] mt-[22px] flex h-[32px] shrink-0 items-center">
      <EllipsisVertical className="-ml-[2px] h-[28px] w-[28px]" strokeWidth={2.4} />
      <span className="ml-[12px]">10개 더</span>
    </div>
    <div className="ml-[34px] mt-[30px] h-[32px] shrink-0 leading-[32px] text-[#d0d0d0]">상호 작용</div>
    <div className="absolute left-[500px] top-[1756px] flex h-[63px] w-[64px] items-center justify-center rounded-full bg-[#1e1e1e] text-[30px] font-light text-white">?</div>
  </div>
);

const Box = () => <span className="mt-[10px] block h-[33px] w-[33px] shrink-0 rounded-[8px] border-[2px] border-[#5a5a5a]" />;

const Nest = ({ children }: { children: React.ReactNode }) => (
  <div className="ml-[16px] border-l-[2px] border-[#3a3a3a] pl-[61px]">{children}</div>
);

const Check = ({ text, nested }: { text: React.ReactNode; nested?: React.ReactNode }) => (
  <div className="mt-[4.5px]">
    <div className="flex items-start">
      <Box />
      <div className="ml-[18px] whitespace-nowrap">{text}</div>
    </div>
    {nested && <Nest>{nested}</Nest>}
  </div>
);

const Dot = ({ text }: { text: React.ReactNode }) => (
  <div className="mt-[4.5px] flex items-start">
    <span className="ml-[13px] mt-[22px] h-[9px] w-[9px] shrink-0 rounded-full bg-[#6a6a6a]" />
    <div className="ml-[14px] whitespace-nowrap">{text}</div>
  </div>
);

const Hl = ({ children }: { children: React.ReactNode }) => <span className="bg-[#6f6033]">{children}</span>;
const Squiggle = ({ children }: { children: React.ReactNode }) => (
  <span className="underline decoration-[#c0483a] decoration-dotted decoration-[2px] underline-offset-[6px]">{children}</span>
);

const NavRow = ({ title, h }: { title: string; h: string }) => (
  <div className={h}>
    <div className="flex h-full items-center pl-[44px] pr-[44px] text-[26px] text-[#b8b8b8]">
      <ArrowLeft className="h-[30px] w-[30px] text-[#9a9a9a]" strokeWidth={1.6} />
      <ArrowRight className="ml-[32px] h-[30px] w-[30px] text-[#5a5a5a]" strokeWidth={1.6} />
      <span className="flex-1 text-center">{title}</span>
      <BookOpen className="h-[32px] w-[32px] text-[#a0a0a0]" strokeWidth={1.6} />
      <Ellipsis className="ml-[28px] h-[30px] w-[30px] text-[#a0a0a0]" strokeWidth={2.4} />
    </div>
  </div>
);

const TinyTab = ({ label, w }: { label: string; w: string }) => (
  <span className={w}>
    <span className="flex h-[34px] items-center justify-center border-r-[2px] border-[#3f3f3f] text-[26px] text-[#7a7a7a]">{label}</span>
  </span>
);

const PaneTab = ({ label }: { label: string }) => (
  <span className="flex h-[44px] w-[121px] items-center justify-center whitespace-nowrap border-r-[2px] border-[#444444] text-[28px] text-[#6e6e6e]">{label}</span>
);

const Scroll = ({ line, thumb }: { line: string; thumb: string }) => (
  <>
    <div className={line} />
    <div className={thumb} />
  </>
);

const NotesWindow = () => (
  <div className="relative flex w-[1280px] shrink-0 flex-col overflow-hidden rounded-b-[20px] rounded-t-[20px] border-t-[2px] border-[#4a4a4a] bg-[#1e1e1e] [font-family:Inter,'Noto_Sans_CJK_KR',sans-serif]">
    <div className="flex h-[85px] shrink-0 items-center border-b-[2px] border-[#3a3a3a] bg-[#262626]">
      <div className="flex items-center gap-[16px] pl-[31px]">
        <span className="h-[24px] w-[24px] rounded-full bg-[#4d4d4d]" />
        <span className="h-[24px] w-[24px] rounded-full bg-[#4d4d4d]" />
        <span className="h-[24px] w-[24px] rounded-full bg-[#4d4d4d]" />
      </div>
      <PanelLeft className="ml-[70px] h-[40px] w-[40px] text-[#a0a0a0]" strokeWidth={1.5} />
      <div className="ml-[39px] flex items-center">
        <TinyTab label="2..." w="block w-[65px]" />
        <TinyTab label="운..." w="block w-[69px]" />
        <TinyTab label="P..." w="block w-[69px]" />
        <TinyTab label="2..." w="block w-[67px]" />
        <TinyTab label="F..." w="block w-[70px]" />
        <TinyTab label="2..." w="block w-[67px]" />
        <TinyTab label="2..." w="block w-[70px]" />
        <TinyTab label="2..." w="block w-[68px]" />
        <TinyTab label="2..." w="block w-[69px]" />
        <span className="flex w-[68px] justify-center text-[26px] text-[#7a7a7a]">확...</span>
      </div>
      <div className="flex h-[74px] w-[72px] items-center justify-center self-end rounded-t-[18px] bg-[#1e1e1e]">
        <X className="h-[36px] w-[36px] text-white" strokeWidth={1.6} />
      </div>
      <Plus className="ml-[21px] h-[36px] w-[36px] text-[#a0a0a0]" strokeWidth={1.6} />
      <ChevronDown className="ml-[48px] h-[34px] w-[34px] text-[#a0a0a0]" strokeWidth={1.6} />
      <PanelRight className="ml-[33px] h-[40px] w-[40px] text-[#a0a0a0]" strokeWidth={1.5} />
    </div>
    <div className="flex min-h-0 flex-1">
      <div className="flex w-[96px] shrink-0 flex-col items-center gap-[36px] border-r-[2px] border-[#3a3a3a] bg-[#1e1e1e] pr-[4px] pt-[29px] text-[#8a8a8a]">
        <FileSearch className="h-[34px] w-[34px]" strokeWidth={1.5} />
        <Calendar className="h-[34px] w-[34px]" strokeWidth={1.5} />
        <GitFork className="h-[34px] w-[34px]" strokeWidth={1.5} />
        <LayoutGrid className="h-[34px] w-[34px]" strokeWidth={1.5} />
        <Copy className="h-[34px] w-[34px]" strokeWidth={1.5} />
        <Terminal className="h-[34px] w-[34px]" strokeWidth={1.5} />
      </div>
      <div className="relative flex min-w-0 flex-1 flex-col text-[33px] leading-[53px] text-[#dadada]">
        <div className="h-[890px] shrink-0 overflow-hidden">
          <NavRow title="오픈 체크 리스트" h="h-[80px]" />
          <div className="pl-[71px] pt-[68px]">
            <div className="text-[68px] font-bold leading-[80px] text-[#e2e2e2]">오픈 체크 리스트</div>
            <div className="ml-[16px] mt-[31px]">
              <Check
                text="차주 설정서류 본인인증 조건 주석 해제"
                nested={<Dot text={<>view/<Squiggle>searchcntr</Squiggle>/image &gt; ln109~120</>} />}
              />
            </div>
            <div className="mr-[101px] mt-[81px] h-[4px] bg-[#363636]" />
            <div className="mt-[27px] border-l-[5px] border-[#7d63d8] pl-[26px]">A100 자동 발송 개발 이후 처리할 목록</div>
            <div className="-mt-[3px] ml-[16px]">
              <Check
                text="NOTE: 대출실행 이후 A100 미발송 이슈 임시 처리 건 삭제"
                nested={
                  <Check
                    text={
                      <>
                        my-case/<Squiggle>cntr</Squiggle>/<span className="text-[#777]">[</span>
                        <span className="text-[#a58cf0]">loanNo</span>
                        <span className="text-[#777]">]</span>
                      </>
                    }
                  />
                }
              />
            </div>
            <div className="mt-[56px] border-l-[5px] border-[#7d63d8] pl-[26px] leading-[51px]">
              <div className="whitespace-nowrap">대출금 요청 서류 업로드 어드민 개발 후 프론트에서 대출금 요청 서류 업</div>
              <div className="whitespace-nowrap">로드 링크 주석 제거하기 &gt; 추가 개발 후 <Hl>운영 배포</Hl></div>
              <div className="ml-[28px] mt-[4px] border-l-[2px] border-[#3a3a3a] pl-[45px]">my-case/loan-cert/confirm</div>
            </div>
          </div>
        </div>
        <div className="flex h-[87px] shrink-0 items-center border-y-[2px] border-[#333333] bg-[#262626] pl-[41px]">
          <PaneTab label="논의 ..." />
          <PaneTab label="202..." />
          <PaneTab label="202..." />
          <PaneTab label="202..." />
          <PaneTab label="전문" />
          <PaneTab label="SR ..." />
          <PaneTab label="202..." />
          <div className="flex h-[72px] w-[122px] items-center justify-center gap-[16px] self-end rounded-t-[18px] border-x-[2px] border-t-[2px] border-[#3a3a3a] bg-[#1e1e1e] text-[28px] text-[#b8b8b8]">
            2...
            <X className="h-[32px] w-[32px] text-white" strokeWidth={1.6} />
          </div>
          <Plus className="ml-[20px] h-[36px] w-[36px] text-[#a0a0a0]" strokeWidth={1.6} />
          <ChevronDown className="ml-[48px] h-[34px] w-[34px] text-[#a0a0a0]" strokeWidth={1.6} />
        </div>
        <div className="min-h-0 flex-1 overflow-hidden">
          <NavRow title="20250525" h="h-[82px]" />
          <div className="pl-[71px] pt-[68px]">
            <div className="text-[68px] font-bold leading-[80px] tracking-[4px] text-[#e2e2e2]">20250525</div>
            <div className="ml-[16px] mt-[31px]">
              <Check text={<>사건수임 내 order 3, 5인 케이스는 백엔드에서 필터링 작업 &gt; 이사<br />님 노티</>} />
              <Check
                text="대출금 요청 서류 업로드 (pay-request/seller-info)"
                nested={
                  <>
                    <Dot text={<>신규 API 통신 후 저장 시 Flutter 통신 &nbsp;&gt; 대출금 지급 결과 페이<br />지(pay-request/loan-info) 이동</>} />
                    <Check text={<Hl>서류 반려 후 승인번호 인증 진행 시 서류 제출 승인 결과 스킵?</Hl>} />
                    <Check
                      text={<>서류 제출 결과 / 지급 요청 결과 분기: <Hl>대출금 지급 요청 중? 서</Hl><br /><Hl>류 제출 결과 코드?</Hl></>}
                      nested={
                        <>
                          <Check text="서류 제출 승인 결과" nested={<Check text="서류 확인 중, 서류 반려, 대출금 지급 결과 X" />} />
                          <Check
                            text="대출금 지급 결과"
                            nested={<Check text={<>대출금 지급 요청 중(= 서류 승인 완료), 대출금 지급<br />완료, 대출금 지급실패</>} />}
                          />
                        </>
                      }
                    />
                  </>
                }
              />
            </div>
          </div>
        </div>
        <Scroll line="absolute right-[27px] top-[81px] h-[810px] w-[2px] bg-[#333333]" thumb="absolute right-[7px] top-[87px] h-[511px] w-[15px] rounded-full bg-[#666666]" />
        <Scroll line="absolute right-[27px] bottom-0 top-[1058px] w-[2px] bg-[#333333]" thumb="absolute right-[7px] top-[1065px] h-[408px] w-[15px] rounded-full bg-[#666666]" />
        <div className="absolute bottom-0 right-0 flex h-[57px] w-[514px] items-center rounded-tl-[18px] border-l-[2px] border-t-[2px] border-[#333333] bg-[#262626] pl-[18px] text-[26px] leading-none text-[#8e8e8e]">
          <span className="whitespace-nowrap">0개 백링크</span>
          <Pencil className="ml-[28px] h-[30px] w-[30px]" strokeWidth={1.6} />
          <span className="ml-[30px] whitespace-nowrap">171개 단어</span>
          <span className="ml-[20px] whitespace-nowrap">833개 문자</span>
        </div>
      </div>
    </div>
  </div>
);

const MenuBar = () => (
  <div className="flex h-[48px] shrink-0 items-center bg-[linear-gradient(to_right,#4b4f40,#46493a_40%,#3b3f34)] text-[25px] text-[#a9ab9e]">
    <FaApple className="ml-[40px] h-[30px] w-[28px]" />
    <span className="ml-[41px] text-[26px] font-bold">Chrome</span>
    <div className="ml-[40px] flex items-center gap-[40px] whitespace-nowrap">
      <span>파일</span>
      <span>수정</span>
      <span>보기</span>
      <span>방문 기록</span>
      <span>북마크</span>
      <span>프로필</span>
      <span>탭</span>
      <span>창</span>
      <span>도움말</span>
    </div>
    <div className="ml-auto flex items-center pr-[36px]">
      <ChevronLeft className="h-[30px] w-[30px]" strokeWidth={1.8} />
      <svg className="ml-[38px]" width="32" height="30" viewBox="0 0 32 30" fill="#a9ab9e">
        <rect x="0" y="0" width="32" height="30" rx="3" />
        <circle cx="6" cy="5" r="1.6" fill="#3f4336" />
        <circle cx="12" cy="5" r="1.6" fill="#3f4336" />
        <circle cx="18" cy="5" r="1.6" fill="#3f4336" />
      </svg>
      <span className="ml-[44px] flex h-[38px] w-[44px] items-center justify-center rounded-[6px] border-[2px] border-[#a9ab9e] text-[22px]">A</span>
      <Wifi className="ml-[41px] h-[34px] w-[34px]" strokeWidth={2.4} />
      <Search className="ml-[36px] h-[30px] w-[30px]" strokeWidth={2} />
      <svg className="ml-[36px]" width="30" height="36" viewBox="0 0 30 36" fill="#a9ab9e">
        <rect x="1" y="2" width="28" height="14" rx="7" />
        <rect x="1" y="20" width="28" height="14" rx="7" />
        <circle cx="22" cy="9" r="4" fill="#3f4336" />
        <circle cx="8" cy="27" r="4" fill="#3f4336" />
      </svg>
      <span className="ml-[36px] whitespace-nowrap text-[26px]">5월 25일 (일) 오전 10:53</span>
    </div>
  </div>
);

export default function App() {
  return (
    <div className="flex h-[2160px] w-[3840px] flex-col overflow-hidden bg-[#1a1c14] [font-family:Inter,'Noto_Sans_CJK_KR','DejaVu_Sans',sans-serif]">
      <MenuBar />
      <div className="h-[2px] shrink-0 bg-[linear-gradient(to_right,#3d4a2a,#27404f,#4a3a22,#25384a,#3d4a2a)]" />
      <div className="flex min-h-0 flex-1">
        <div className="flex w-[2560px] shrink-0 flex-col overflow-hidden rounded-b-[20px] rounded-t-[20px] border-t-[2px] border-[#4a4a4a]">
          <ChromeBar />
          <div className="flex min-h-0 flex-1">
            <LeftSidebar />
            <Canvas />
            <RightPanel />
          </div>
        </div>
        <NotesWindow />
      </div>
    </div>
  );
}
